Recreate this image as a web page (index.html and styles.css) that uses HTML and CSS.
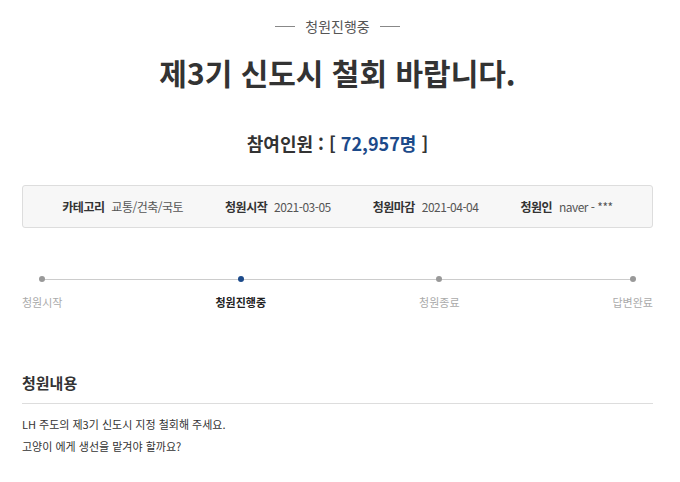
FILE: index.html
```html
<!doctype html>
<html lang="ko">
	<head>
		<meta charset="utf-8">
		<meta name="viewport" content="width=device-width, initial-scale=1">
		<title>청원진행중</title>

		<link rel="stylesheet" href="styles.css">
	</head>
	<body>
		<div class="petition">
			<div class="status"><span>청원진행중</span></div>
			<h1 class="title">제3기 신도시 철회 바랍니다.</h1>
			<p class="count">참여인원 : [ <span class="countNum">72,957명</span> ]</p>

			<ul class="info">
				<li><b>카테고리</b> 교통/건축/국토</li>
				<li><b>청원시작</b> 2021-03-05</li>
				<li><b>청원마감</b> 2021-04-04</li>
				<li><b>청원인</b> naver - ***</li>
			</ul>

			<ol class="steps">
				<li class="step"><i class="dot"></i><span>청원시작</span></li>
				<li class="step on"><i class="dot"></i><span>청원진행중</span></li>
				<li class="step"><i class="dot"></i><span>청원종료</span></li>
				<li class="step"><i class="dot"></i><span>답변완료</span></li>
			</ol>

			<div class="content">
				<h2 class="contentTitle">청원내용</h2>
				<div class="contentText">
					<p>LH 주도의 제3기 신도시 지정 철회해 주세요.</p>
					<p>고양이 에게 생선을 맡겨야 할까요?</p>
				</div>
			</div>
		</div>
	</body>
</html>
```

FILE: styles.css
```css
body {
    margin: 0;
    background: #fff;
    color: #333;
    font-family: "Noto Sans CJK KR", "Noto Sans", sans-serif;
}

.petition {
    padding: 16px 27px 0 22px;
}

.status {
    display: flex;
    justify-content: center;
    align-items: center;
    gap: 10px;
    font-size: 14px;
    line-height: 20px;
    color: #555;
}

.status::before,
.status::after {
    content: "";
    width: 20px;
    height: 1px;
    background: #888;
}

.title {
    margin: 17px 0 0;
    text-align: center;
    font-size: 30px;
    line-height: 38px;
    font-weight: 700;
    color: #333;
}

.count {
    margin: 39px 0 0;
    text-align: center;
    font-size: 18px;
    line-height: 26px;
    font-weight: 700;
    color: #333;
}

.countNum {
    color: #1c4a8a;
}

.info {
    display: flex;
    justify-content: center;
    gap: 42px;
    margin: 29px 0 0;
    padding: 0;
    list-style: none;
    border: 1px solid #ddd;
    border-radius: 3px;
    background: #f7f7f7;
    font-size: 12px;
    line-height: 41px;
    color: #555;
    letter-spacing: -0.5px;
}

.info b {
    color: #333;
    margin-right: 4px;
}

.steps {
    position: relative;
    display: flex;
    justify-content: space-between;
    margin: 48px 0 0;
    padding: 0;
    list-style: none;
}

.steps::before {
    content: "";
    position: absolute;
    top: 3px;
    left: 20px;
    right: 20px;
    height: 1px;
    background: #ccc;
}

.step {
    position: relative;
    display: flex;
    flex-direction: column;
    align-items: center;
    gap: 12px;
    font-size: 11px;
    line-height: 16px;
    color: #aaa;
}

.dot {
    width: 6px;
    height: 6px;
    border-radius: 50%;
    background: #999;
}

.step.on {
    color: #222;
    font-weight: 700;
}

.step.on .dot {
    background: #1c4a8a;
}

.content {
    margin-top: 62px;
}

.contentTitle {
    margin: 0;
    padding-bottom: 9px;
    border-bottom: 1px solid #ddd;
    font-size: 15px;
    line-height: 22px;
    font-weight: 700;
    color: #333;
}

.contentText {
    margin-top: 9px;
    font-size: 11px;
    line-height: 22px;
    color: #333;
}

.contentText p {
    margin: 0;
}
```
